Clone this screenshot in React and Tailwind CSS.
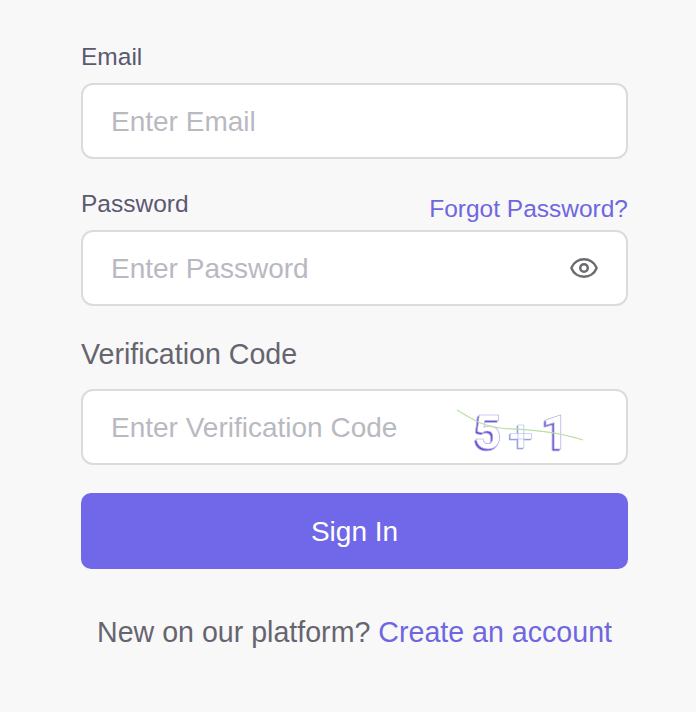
import React, { useState } from "react";
import { Eye } from "lucide-react";

function Captcha() {
  return (
    <svg width="132" height="70" viewBox="0 -8 132 70" className="absolute right-[42px] top-[5px]">
      <defs>
        <filter id="digitShadow" x="-20%" y="-20%" width="140%" height="140%">
          <feDropShadow dx="-1.5" dy="1.5" stdDeviation="0.2" floodColor="#5f4ccb" />
        </filter>
        <filter id="plusShadow" x="-20%" y="-20%" width="140%" height="140%">
          <feDropShadow dx="-1" dy="1" stdDeviation="0.2" floodColor="#8f9cdb" />
        </filter>
      </defs>
      <g fontFamily="Roboto, sans-serif" fontWeight="700" fill="#ffffff" stroke="#a79fe8" strokeWidth="0.6">
        <text x="20" y="47" fontSize="48" filter="url(#digitShadow)">5</text>
        <text x="55" y="49" fontSize="44" stroke="#aab4e6" filter="url(#plusShadow)">+</text>
        <text x="88" y="47" fontSize="48" filter="url(#digitShadow)">1</text>
      </g>
      <path d="M3 8 C 18 17, 28 24, 46 26 S 95 27, 129 38" fill="none" stroke="#b9dfa8" strokeWidth="1.2" />
    </svg>
  );
}

function App() {
  const [email, setEmail] = useState("");
  const [password, setPassword] = useState("");
  const [code, setCode] = useState("");

  const inputClass =
    "w-full h-[76px] pl-[28px] pr-4 pt-[2px] rounded-[12px] border-2 border-[#dbdbdc] bg-white text-[28px] text-[#5b5970] placeholder-[#b9b9c2] outline-none";

  return (
    <div className="w-full min-h-screen bg-[#f8f8f9] px-[81px] pt-[40px] font-['Liberation_Sans',sans-serif]">
      <div className="w-[547px]">
        {/* Email */}
        <label className="block text-[24.5px] leading-[34px] text-[#5b5970] mb-[9px]">Email</label>
        <input
          type="text"
          placeholder="Enter Email"
          value={email}
          onChange={(e) => setEmail(e.target.value)}
          className={inputClass}
        />

        {/* Password */}
        <div className="flex justify-between items-end mt-[27px] mb-[3px] h-[41px]">
          <label className="text-[24.5px] leading-[34px] text-[#5b5970] mb-[6px]">Password</label>
          <a className="text-[24.5px] leading-[34px] text-[#6f67e0] mb-[1px]">Forgot Password?</a>
        </div>
        <div className="relative">
          <input
            type="password"
            placeholder="Enter Password"
            value={password}
            onChange={(e) => setPassword(e.target.value)}
            className={inputClass}
          />
          <Eye className="absolute right-[29px] top-[23px] w-[30px] h-[30px] text-[#6b6b70]" strokeWidth={2} />
        </div>

        {/* Verification */}
        <label className="block mt-[29px] mb-[15px] text-[28.6px] leading-[39px] text-[#66656f]">Verification Code</label>
        <div className="relative">
          <input
            type="text"
            placeholder="Enter Verification Code"
            value={code}
            onChange={(e) => setCode(e.target.value)}
            className={inputClass}
          />
          <Captcha />
        </div>

        <button className="w-full h-[76px] mt-[28px] pt-[1px] rounded-[10px] bg-[#7068e8] text-white text-[28px]">Sign In</button>

        <p className="mt-[44px] text-center text-[28.6px] leading-[39px] text-[#66656f]">
          New on our platform? <a className="text-[#6f67e0]">Create an account</a>
        </p>
      </div>
    </div>
  );
}

export default App;
